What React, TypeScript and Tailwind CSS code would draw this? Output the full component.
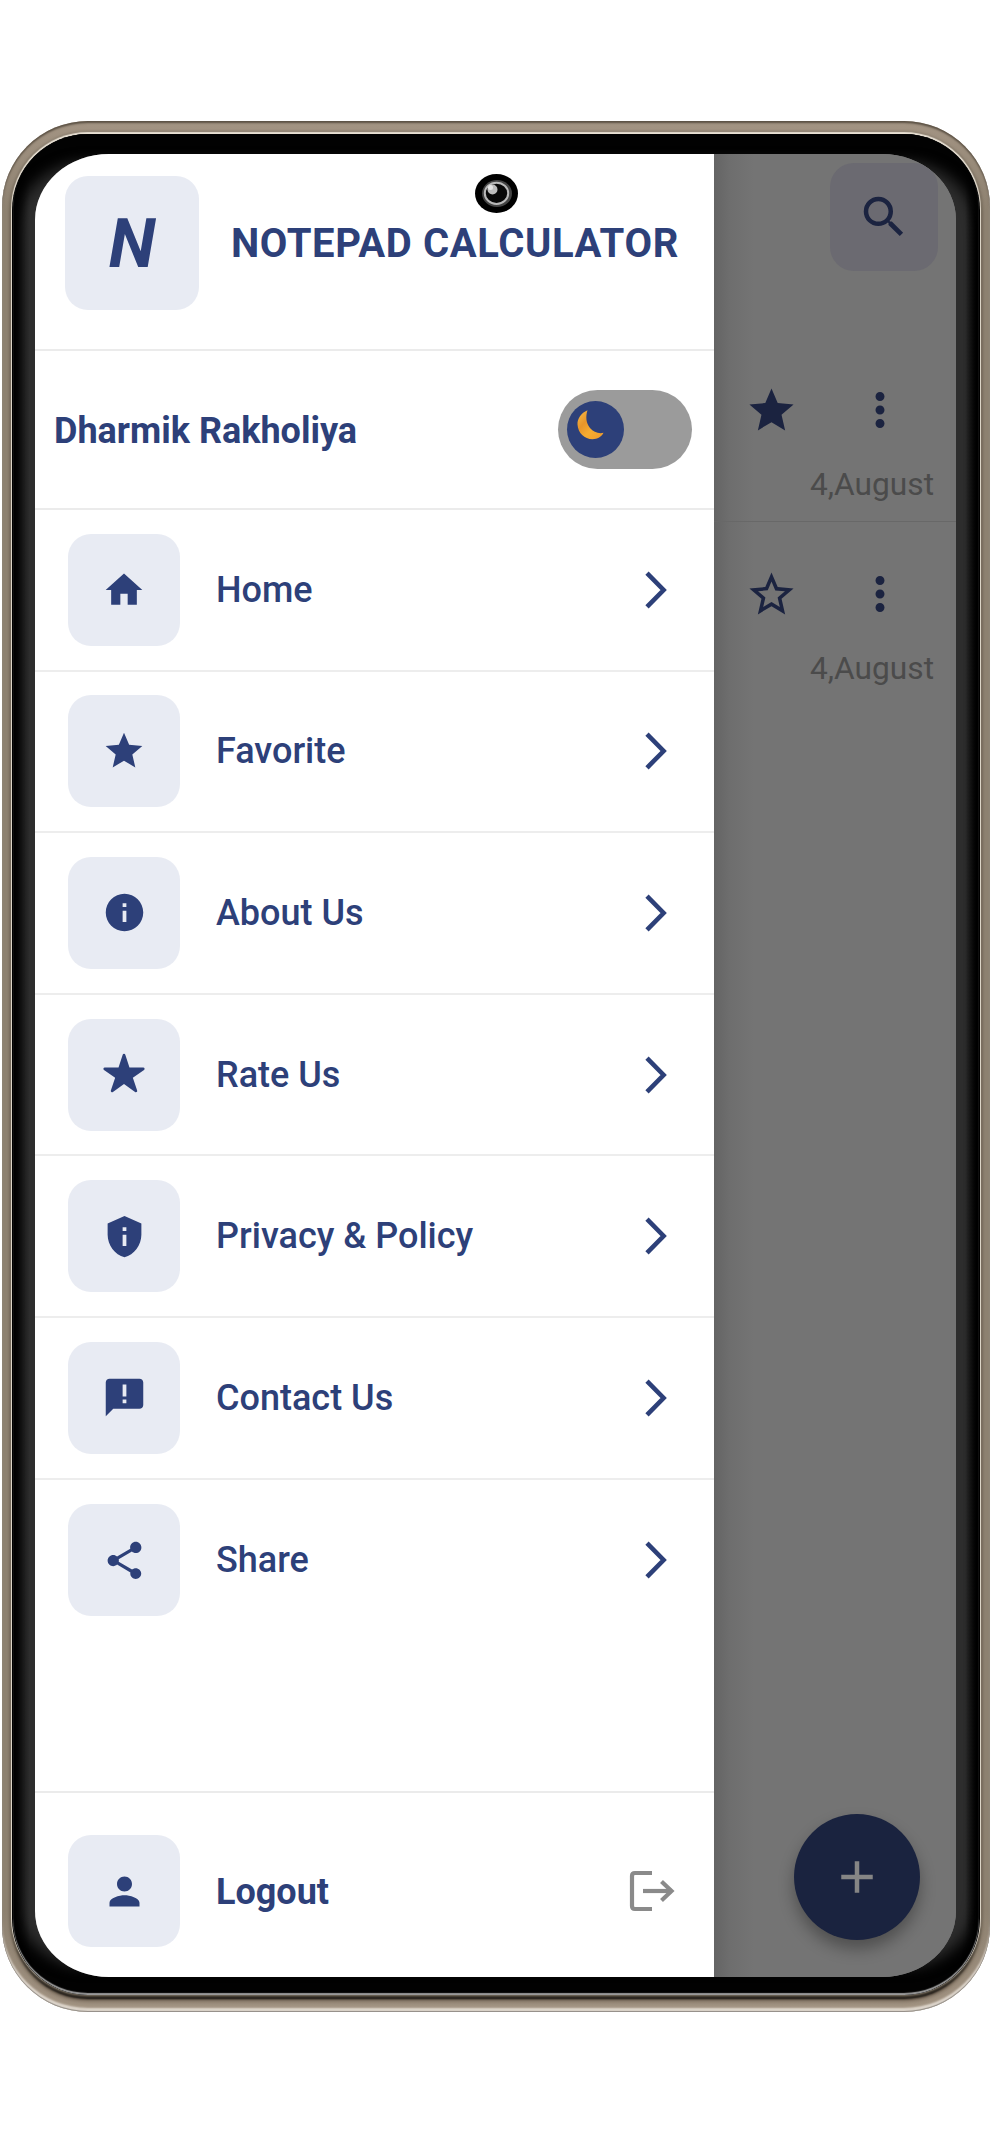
import type { ReactNode } from "react";
import {
  MdAdd,
  MdHome,
  MdInfo,
  MdMoreVert,
  MdPerson,
  MdPrivacyTip,
  MdSearch,
  MdShare,
  MdStar,
  MdStarOutline,
} from "react-icons/md";
import { IoStar } from "react-icons/io5";

function FeedbackIcon() {
  return (
    <svg width="45" height="45" viewBox="0 0 24 24" fill="currentColor">
      <path
        fillRule="evenodd"
        d="M20 2H4c-1.100 0-2 .9-2 2v18l4-4h14c1.100 0 2-.9 2-2V4c0-1.100-.9-2-2-2zM13 15h-2v-2h2v2zM13 11.500h-2V5h2v6.500z"
      />
    </svg>
  );
}

const items: { label: string; icon: ReactNode }[] = [
  { label: "Home", icon: <MdHome size={44} /> },
  { label: "Favorite", icon: <MdStar size={44} /> },
  { label: "About Us", icon: <MdInfo size={45} /> },
  { label: "Rate Us", icon: <IoStar size={44} className="-mt-1" /> },
  { label: "Privacy & Policy", icon: <MdPrivacyTip size={45} /> },
  { label: "Contact Us", icon: <FeedbackIcon /> },
  { label: "Share", icon: <MdShare size={45} /> },
];

function Tile({ children }: { children: ReactNode }) {
  return (
    <div className="flex size-[112px] shrink-0 items-center justify-center rounded-[23px] bg-[#e8ebf3]">
      {children}
    </div>
  );
}

function Chevron() {
  return (
    <svg width="24" height="40" viewBox="0 0 24 40" fill="none" className="ml-auto mr-[46px]">
      <path d="M3 3.200 19.600 20 3 36.800" stroke="#2d4079" strokeWidth="4.600" />
    </svg>
  );
}

function LogoutIcon() {
  return (
    <svg width="46" height="42" viewBox="0 0 46 42" fill="none" stroke="#8a8a8a" strokeWidth="4.200" className="ml-auto mr-[39px]">
      <path d="M23 3H6Q3 3 3 6V36Q3 39 6 39H23" />
      <path d="M14 21H43" />
      <path d="M32.500 11.500 42.500 21 32.500 30.500" />
    </svg>
  );
}

function Moon() {
  return (
    <svg width="28" height="30" viewBox="0 0 28 30" className="mr-[10px] -mt-[9px]">
      <defs>
        <linearGradient id="moon" x1="0" y1="0" x2="1" y2="1">
          <stop offset="0" stopColor="#f8bd48" />
          <stop offset="0.35" stopColor="#e8952a" />
          <stop offset="0.6" stopColor="#f7ac30" />
          <stop offset="1" stopColor="#ee9a2c" />
        </linearGradient>
      </defs>
      <path
        d="M10.500.2C4 3 .3 8.500.5 14.500 1 23 7.500 29.200 15.500 29.200c5 0 9-2.500 11-6.400C21.500 24 16.500 22 13 18 9 13 8.500 6.500 10.500.2Z"
        fill="url(#moon)"
      />
    </svg>
  );
}

function Camera() {
  return (
    <svg width="43" height="39" viewBox="0 0 43 39" preserveAspectRatio="none" className="absolute left-[440px] top-[20px]">
      <ellipse cx="21.500" cy="19.500" rx="21.500" ry="19.500" fill="#000" />
      <ellipse cx="22" cy="19.500" rx="15" ry="13.500" fill="#444" />
      <ellipse cx="21.500" cy="19.300" rx="11.700" ry="10.600" fill="#090909" stroke="#b9b9b9" strokeWidth="2" />
      <circle cx="17.500" cy="15.500" r="5" fill="#bdbdbd" />
      <circle cx="15.500" cy="13.500" r="2.500" fill="#e4e4e4" />
    </svg>
  );
}

function NoteRow({ starred }: { starred: boolean }) {
  return (
    <div className="flex h-[184px] flex-col border-b border-[#686868] last:border-b-0">
      <div className="mt-[45px] flex h-[54px] items-center pl-[31px] text-[#1b2340]">
        {starred ? <MdStar size={53} /> : <MdStarOutline size={53} />}
        <MdMoreVert size={54} className="ml-[55px]" />
      </div>
      <div className="mr-[22px] mt-[30px] text-right text-[31.700px] leading-[36px] text-[#4b4b4b]">4,August</div>
    </div>
  );
}

export default function App() {
  return (
    <div className="h-[2135px] w-[992px] overflow-hidden bg-white px-[2px] pt-[121px] font-['Roboto',sans-serif]">
      <div className="h-[1891px] rounded-[86px] bg-[linear-gradient(to_bottom,#a39483,#8d8170_90px,#8d8170_1790px,#a39483)] px-[10px] pb-[17px] pt-[13px] shadow-[inset_0_2px_2px_#5b5144,inset_0_-1px_1px_#8f8a84,inset_0_-4px_2px_#e0d8ce]">
        <div className="h-full rounded-[76px] bg-black px-[1px] shadow-[0_-1px_1px_1px_#e9e1d4,0_0_3px_2px_#665c4d,0_4px_2px_#0b0907,0_6px_4px_#6b5d4e]">
          <div className="h-full rounded-[75px] bg-[linear-gradient(to_right,#000,#2d2d2d_16px,#2d2d2d_952px,#000_964px)] px-[22px] pb-[18px] pt-[20px] shadow-[inset_0_-2px_1px_#999,inset_0_28px_14px_#020202,inset_0_-28px_14px_#020202]">
            <div className="relative flex h-[1823px] w-[921px] overflow-hidden rounded-[74px/66px] bg-[#747474]">
              <aside className="flex w-[679px] shrink-0 flex-col bg-white text-[#2d4079]">
                <header className="flex h-[197px] items-start border-b-2 border-[#ebebeb] pl-[30px] pt-[22px]">
                  <div className="flex size-[134px] items-center justify-center rounded-[23px] bg-[#e8ebf3] pt-[2px] text-[68px] font-bold italic">
                    N
                  </div>
                  <h1 className="ml-[32px] whitespace-nowrap text-[40px] font-bold leading-[136px] tracking-[0.600px]">
                    NOTEPAD CALCULATOR
                  </h1>
                </header>
                <div className="flex h-[159px] items-center border-b-2 border-[#ebebeb] pl-[19px] pr-[22px]">
                  <span className="pt-[2px] text-[36px] font-bold">Dharmik Rakholiya</span>
                  <div className="ml-auto flex h-[79px] w-[134px] items-center rounded-full bg-[#9b9b9b] pl-[9px]">
                    <div className="flex size-[57px] items-center justify-center rounded-full bg-[#2d4079]">
                      <Moon />
                    </div>
                  </div>
                </div>
                <nav>
                  {items.map((item) => (
                    <div
                      key={item.label}
                      className="flex h-[161.600px] items-center border-b-2 border-[#ededed] pl-[33px] last:border-b-0"
                    >
                      <Tile>{item.icon}</Tile>
                      <span className="ml-[36px] text-[36px] font-medium">{item.label}</span>
                      <Chevron />
                    </div>
                  ))}
                </nav>
                <footer className="mt-auto flex h-[186px] items-start border-t-2 border-[#ebebeb] pl-[33px] pt-[42px]">
                  <Tile>
                    <MdPerson size={45} />
                  </Tile>
                  <div className="flex h-[112px] grow items-center">
                    <span className="ml-[36px] pt-[1px] text-[36px] font-bold">Logout</span>
                    <LogoutIcon />
                  </div>
                </footer>
              </aside>
              <main className="flex grow flex-col bg-[linear-gradient(to_right,#646464,#6e6e6e_16px,#747474_40px)]">
                <div className="ml-auto mr-[18px] mt-[9px] flex size-[108px] shrink-0 items-center justify-center rounded-[24px] bg-[#6b6a71] text-[#1b2340]">
                  <MdSearch size={54} />
                </div>
                <div className="mt-[67px]">
                  <NoteRow starred />
                  <NoteRow starred={false} />
                </div>
                <div className="mb-[37px] ml-auto mr-[36px] mt-auto flex size-[126px] items-center justify-center rounded-full bg-[#1a233f] text-[#858585] shadow-[0_9px_16px_rgba(0,0,0,0.32)]">
                  <MdAdd size={54} />
                </div>
              </main>
              <Camera />
            </div>
          </div>
        </div>
      </div>
    </div>
  );
}
